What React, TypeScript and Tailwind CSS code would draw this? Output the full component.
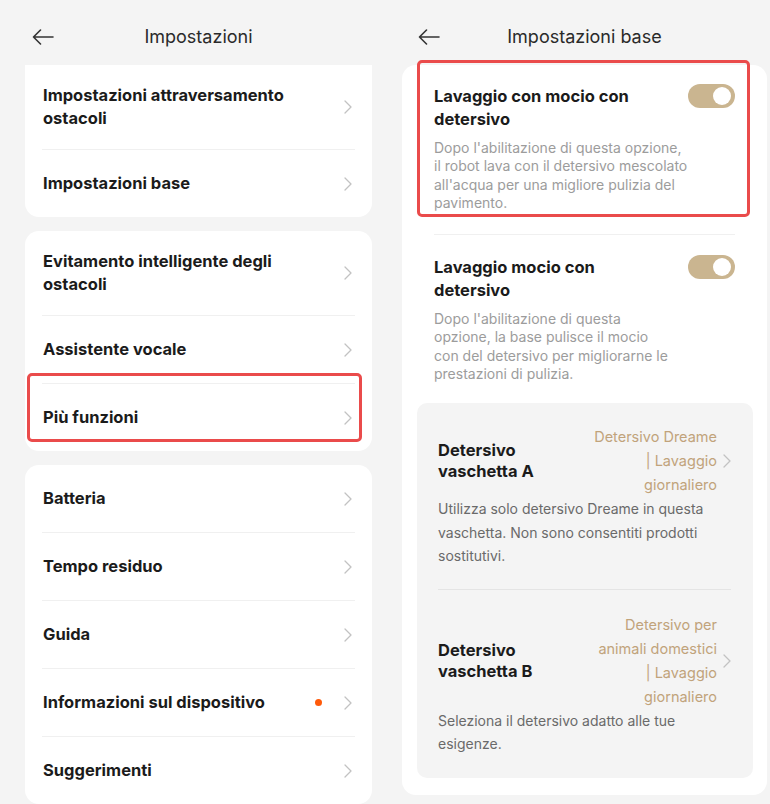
import React from "react";

const font = { fontFamily: "Inter, 'Noto Sans', sans-serif" };

const Chevron = ({ className = "" }: { className?: string }) => (
  <svg width="8" height="14" viewBox="0 0 8 14" className={className}>
    <polyline
      points="1,1 7,7 1,13"
      fill="none"
      stroke="#c2c2c2"
      strokeWidth="1.3"
      strokeLinecap="round"
      strokeLinejoin="round"
    />
  </svg>
);

const BackArrow = () => (
  <svg width="22" height="16" viewBox="0 0 22 16">
    <path
      d="M21 8H1.5M8.5 1L1.5 8l7 7"
      fill="none"
      stroke="#333"
      strokeWidth="1.6"
      strokeLinecap="round"
      strokeLinejoin="round"
    />
  </svg>
);

const Toggle = () => (
  <div className="w-[47px] h-[24px] rounded-full bg-[#cab590] flex items-center justify-end pr-[4px] shrink-0">
    <div className="w-[18px] h-[18px] rounded-full bg-white" />
  </div>
);

type Row = { label: string; dot?: boolean; marked?: boolean };

const SettingsCard = ({ rows, flatTop }: { rows: Row[]; flatTop?: boolean }) => (
  <div className={`bg-white ${flatTop ? "rounded-b-[14px]" : "rounded-[14px]"}`}>
    {rows.map((row, i) => (
      <div key={row.label} className="relative">
        {i > 0 && <div className="mx-[17px] h-px bg-[#f0f0f0]" />}
        <div className="min-h-[67px] py-[19px] pl-[18px] pr-[20px] flex items-center gap-3">
          <span className="flex-1 text-[16.5px] leading-[23px] font-bold text-[#1b1b1b] pr-[20px]">
            {row.label}
          </span>
          {row.dot && <span className="w-[7px] h-[7px] rounded-full bg-[#ff5a0a] mr-[10px]" />}
          <Chevron />
        </div>
        {row.marked && (
          <div className="absolute top-[-10px] left-[2px] right-[10px] h-[69px] border-[3px] border-[#ea4b4b] rounded-[5px]" />
        )}
      </div>
    ))}
  </div>
);

const Header = ({ title, arrowLeft }: { title: string; arrowLeft: string }) => (
  <div className="relative h-[65px] flex items-center justify-center pt-[8px]">
    <div className={`absolute ${arrowLeft} top-[29px]`}>
      <BackArrow />
    </div>
    <span className="text-[18px] text-[#2a2a2a]">{title}</span>
  </div>
);

const ToggleSection = ({ title, desc, descWidth }: { title: string; desc: string; descWidth: string }) => (
  <div className="flex items-start">
    <div className="flex-1 min-w-0">
      <div className="text-[16.5px] leading-[23px] font-bold text-[#1b1b1b] w-[220px]">{title}</div>
      <div className={`mt-[8px] text-[14px] leading-[18.3px] text-[#9c9c9c] ${descWidth}`}>{desc}</div>
    </div>
    <div className="mt-[-1px]">
      <Toggle />
    </div>
  </div>
);

const Tank = ({ title, value, desc }: { title: string; value: string[]; desc: string }) => (
  <div>
    <div className="flex items-center justify-between">
      <div className="w-[140px] text-[16.5px] leading-[21px] font-bold text-[#1b1b1b]">{title}</div>
      <div className="flex items-center gap-[6px]">
        <div className="text-right text-[14.5px] leading-[24px] text-[#c1a37b]">
          {value.map((v) => (
            <div key={v}>{v}</div>
          ))}
        </div>
        <Chevron />
      </div>
    </div>
    <div className="text-[14px] leading-[23.5px] text-[#6a6a6a] pr-[20px]">{desc}</div>
  </div>
);

export default function App() {
  return (
    <div className="w-[770px] h-[804px] bg-[#f4f4f4] flex overflow-hidden" style={font}>
      <div className="ml-[25px] w-[347px] shrink-0">
        <Header title="Impostazioni" arrowLeft="left-[7px]" />
        <div className="flex flex-col gap-[14px]">
          <SettingsCard
            flatTop
            rows={[{ label: "Impostazioni attraversamento ostacoli" }, { label: "Impostazioni base" }]}
          />
          <SettingsCard
            rows={[
              { label: "Evitamento intelligente degli ostacoli" },
              { label: "Assistente vocale" },
              { label: "Più funzioni", marked: true },
            ]}
          />
          <SettingsCard
            rows={[
              { label: "Batteria" },
              { label: "Tempo residuo" },
              { label: "Guida" },
              { label: "Informazioni sul dispositivo", dot: true },
              { label: "Suggerimenti" },
            ]}
          />
        </div>
      </div>

      <div className="ml-[30px] w-[365px] shrink-0">
        <Header title="Impostazioni base" arrowLeft="left-[16px]" />
        <div className="relative bg-white rounded-[14px] h-[730px] pt-[20px]">
          <div className="px-[32px]">
            <ToggleSection
              title="Lavaggio con mocio con detersivo"
              descWidth="w-[256px]"
              desc="Dopo l'abilitazione di questa opzione, il robot lava con il detersivo mescolato all'acqua per una migliore pulizia del pavimento."
            />
            <div className="h-px bg-[#f0f0f0] mt-[22px] mb-[21px]" />
            <ToggleSection
              title="Lavaggio mocio con detersivo"
              descWidth="w-[240px]"
              desc="Dopo l'abilitazione di questa opzione, la base pulisce il mocio con del detersivo per migliorarne le prestazioni di pulizia."
            />
          </div>
          <div className="mt-[20px] ml-[15px] mr-[14px] bg-[#f4f4f4] rounded-[10px] pl-[21px] pr-[22px] pt-[22px] pb-[22px]">
            <Tank
              title="Detersivo vaschetta A"
              value={["Detersivo Dreame", "| Lavaggio", "giornaliero"]}
              desc="Utilizza solo detersivo Dreame in questa vaschetta. Non sono consentiti prodotti sostitutivi."
            />
            <div className="h-px bg-[#e4e4e4] mt-[21px] mb-[23px]" />
            <Tank
              title="Detersivo vaschetta B"
              value={["Detersivo per", "animali domestici", "| Lavaggio", "giornaliero"]}
              desc="Seleziona il detersivo adatto alle tue esigenze."
            />
          </div>
          <div className="absolute top-[-5px] left-[15px] right-[17px] h-[157px] border-[3px] border-[#ea4b4b] rounded-[5px]" />
        </div>
      </div>
    </div>
  );
}
